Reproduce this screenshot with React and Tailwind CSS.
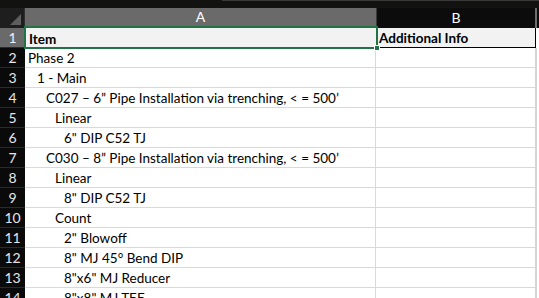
import React from "react";

const rows = [
  { n: 1, text: "Item", b: "Additional Info", header: true },
  { n: 2, text: "Phase 2", indent: "pl-[3px]" },
  { n: 3, text: "1 - Main", indent: "pl-[12px]" },
  { n: 4, text: "C027 – 6” Pipe Installation via trenching, < = 500’", indent: "pl-[21px]" },
  { n: 5, text: "Linear", indent: "pl-[30px]" },
  { n: 6, text: "6\" DIP C52 TJ", indent: "pl-[39px]" },
  { n: 7, text: "C030 – 8” Pipe Installation via trenching, < = 500’", indent: "pl-[21px]" },
  { n: 8, text: "Linear", indent: "pl-[30px]" },
  { n: 9, text: "8\" DIP C52 TJ", indent: "pl-[39px]" },
  { n: 10, text: "Count", indent: "pl-[30px]" },
  { n: 11, text: "2\" Blowoff", indent: "pl-[39px]" },
  { n: 12, text: "8\" MJ 45° Bend DIP", indent: "pl-[39px]" },
  { n: 13, text: "8\"x6\" MJ Reducer", indent: "pl-[39px]" },
  { n: 14, text: "8\"x8\" MJ TEE", indent: "pl-[39px]" },
];

const App = () => {
  return (
    <div className="w-[539px] h-[298px] overflow-hidden bg-white font-['Lato','Liberation_Sans',sans-serif] text-[13.5px] leading-[16px] text-black">
      {/* Formula bar edge */}
      <div className="h-[8px] bg-[#121210] flex">
        <div className="w-[222px]" />
        <div className="flex-1 h-[1px] bg-[#3a3a3a]" />
      </div>

      {/* Column headers */}
      <div className="flex h-[20px] text-[14px] text-white">
        <div className="w-[25px] bg-[#1e1e1e] relative border-r border-[#2e2e2e]">
          <div className="absolute right-[3px] bottom-[3px] w-0 h-0 border-l-[11px] border-l-transparent border-b-[11px] border-b-[#5e5e5e]" />
        </div>
        <div className="w-[351px] bg-[#6a6a6a] flex items-center justify-center border-b-2 border-[#217346]">A</div>
        <div className="w-[1px] bg-[#3c3c3c]" />
        <div className="w-[158px] bg-[#0c0c0c] flex items-center justify-center">B</div>
        <div className="w-[2px] bg-[#6e6e6e]" />
        <div className="flex-1 bg-[#0c0c0c]" />
      </div>

      {rows.map((r) => (
        <div key={r.n} className="flex h-[20px]">
          <div
            className={`w-[25px] shrink-0 flex items-center justify-center text-[14px] border-b border-[#2a2a2a] ${
              r.header ? "bg-[#6a6a6a] text-[#eaf2ff]" : "bg-[#0a0a0a] text-[#e6e6e6]"
            }`}
          >
            {r.n}
          </div>
          {r.header ? (
            <>
              <div className="w-[352px] shrink-0 relative bg-[#f2f2f2] flex items-end pb-[1px] pl-[4px] font-bold">
                <div className="absolute -left-[1px] -top-[2px] -right-[1px] -bottom-[1px] border-2 border-[#217346]" />
                <div className="absolute -right-[3px] -bottom-[3px] w-[6px] h-[6px] bg-[#217346] border border-white" />
                {r.text}
              </div>
              <div className="w-[158px] shrink-0 bg-[#f2f2f2] border-b border-black flex items-end pb-[1px] pl-[2px] font-bold">
                {r.b}
              </div>
              <div className="w-[1px] bg-black" />
              <div className="flex-1 bg-white" />
            </>
          ) : (
            <>
              <div className={`w-[351px] shrink-0 border-b border-r border-[#d9d9d9] flex items-end pb-[1px] whitespace-nowrap ${r.indent}`}>
                {r.text}
              </div>
              <div className="w-[159px] shrink-0 border-b border-[#d9d9d9]" />
              <div className="w-[2px] bg-[#d4d4d4]" />
              <div className="flex-1 bg-white" />
            </>
          )}
        </div>
      ))}
    </div>
  );
};

export default App;
